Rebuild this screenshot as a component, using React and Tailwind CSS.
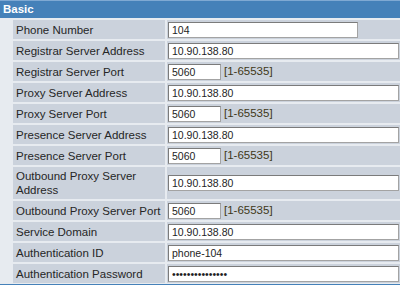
import React from 'react'

const rows = [
  { label: 'Phone Number', value: '104', kind: 'short' },
  { label: 'Registrar Server Address', value: '10.90.138.80', kind: 'long' },
  { label: 'Registrar Server Port', value: '5060', kind: 'port' },
  { label: 'Proxy Server Address', value: '10.90.138.80', kind: 'long' },
  { label: 'Proxy Server Port', value: '5060', kind: 'port' },
  { label: 'Presence Server Address', value: '10.90.138.80', kind: 'long' },
  { label: 'Presence Server Port', value: '5060', kind: 'port' },
  { label: 'Outbound Proxy Server Address', value: '10.90.138.80', kind: 'long' },
  { label: 'Outbound Proxy Server Port', value: '5060', kind: 'port' },
  { label: 'Service Domain', value: '10.90.138.80', kind: 'long' },
  { label: 'Authentication ID', value: 'phone-104', kind: 'long' },
  { label: 'Authentication Password', value: '123456789012345', kind: 'password' },
]

const inputCls =
  "h-[16px] bg-white border border-[#a3a3a3] border-t-[#7b7b7b] border-l-[#7b7b7b] px-[3px] text-[10.5px] text-[#1e1e1e] font-['Liberation_Sans',Arial,sans-serif] outline-none"

const Field = ({ row }) => {
  if (row.kind === 'port') {
    return (
      <div className="flex items-center">
        <input readOnly defaultValue={row.value} className={`${inputCls} w-[53px]`} />
        <span className="ml-[3px] text-[11.5px] text-[#3f3818]">[1-65535]</span>
      </div>
    )
  }
  if (row.kind === 'short') {
    return <input readOnly defaultValue={row.value} className={`${inputCls} w-[190px]`} />
  }
  return (
    <input
      readOnly
      type={row.kind === 'password' ? 'password' : 'text'}
      defaultValue={row.value}
      className={`${inputCls} w-[231px]`}
    />
  )
}

export default function App() {
  return (
    <div className="w-[400px] h-[285px] overflow-hidden bg-[#e7ebf0] font-['Liberation_Sans',Arial,sans-serif]">
      {/* section header */}
      <div className="h-[18px] bg-[#4581b9] border-t border-[#7fa9d3] pl-[3px] flex items-center text-white font-bold text-[11.5px]">
        Basic
      </div>

      <div className="pl-[13px] pt-[2px] flex flex-col gap-[2px]">
        {rows.map((row) => (
          <div key={row.label} className="grid grid-cols-[152px_1fr] gap-x-[2px]">
            <div className="bg-[#cbd2dc] min-h-[19px] px-[3px] py-[2px] flex items-center text-[11.5px] leading-[14px] text-[#262626]">
              {row.label}
            </div>
            <div className="bg-[#cbd2dc] flex items-center pl-[1px]">
              <Field row={row} />
            </div>
          </div>
        ))}
      </div>

      <div className="mt-[1px] h-[4px] bg-[#4581b9]" />
    </div>
  )
}
